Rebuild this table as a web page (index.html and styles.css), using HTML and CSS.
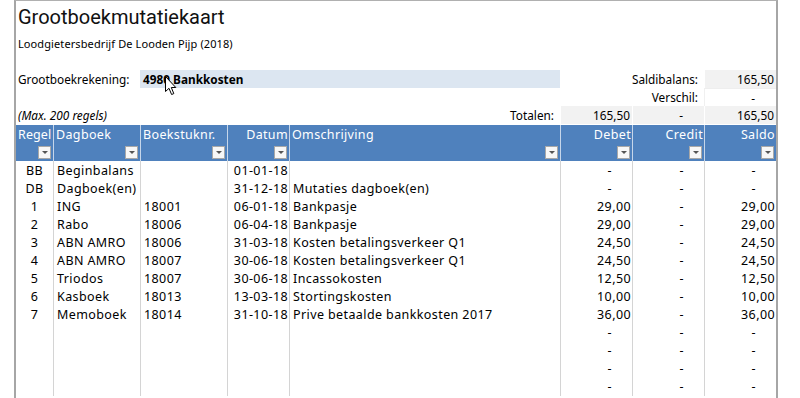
FILE: index.html
```html
<!DOCTYPE html>
<html>
<head>
<meta charset="utf-8">
<link rel="stylesheet" href="styles.css">
</head>
<body>
<div class="sheet">
  <div class="title">Grootboekmutatiekaart</div>
  <div class="subtitle">Loodgietersbedrijf De Looden Pijp (2018)</div>

  <div class="row top">
    <div class="c span2 lbl">Grootboekrekening:</div>
    <div class="c span3 input">4980 Bankkosten
      <svg class="cursor" width="13" height="20" viewBox="0 0 13 20"><path d="M0.5 0.5 L0.5 15.5 L4 12.3 L6.6 18.5 L8.8 17.6 L6.3 11.5 L10.8 11.5 Z" fill="#fff" stroke="#000" stroke-width="1" stroke-linejoin="miter"/></svg>
    </div>
    <div class="c span2 rlbl">Saldibalans:</div>
    <div class="c num gray">165,50</div>
  </div>
  <div class="row top">
    <div class="c span7 rlbl">Verschil:</div>
    <div class="c num boxed"><span class="dash">-</span></div>
  </div>
  <div class="row top">
    <div class="c span5 tot"><span class="max">(Max. 200 regels)</span><span>Totalen:</span></div>
    <div class="c num gray">165,50</div>
    <div class="c num gray"><span class="dash">-</span></div>
    <div class="c num gray">165,50</div>
  </div>

  <div class="row head">
    <div class="h"><span>Regel</span><i class="dd"></i></div>
    <div class="h"><span>Dagboek</span><i class="dd"></i></div>
    <div class="h"><span>Boekstuknr.</span><i class="dd"></i></div>
    <div class="h r"><span>Datum</span><i class="dd"></i></div>
    <div class="h"><span>Omschrijving</span><i class="dd"></i></div>
    <div class="h r"><span>Debet</span><i class="dd"></i></div>
    <div class="h r"><span>Credit</span><i class="dd"></i></div>
    <div class="h r"><span>Saldo</span><i class="dd"></i></div>
  </div>

  <div class="row data"><div class="d ctr">BB</div><div class="d">Beginbalans</div><div class="d"></div><div class="d rt">01-01-18</div><div class="d"></div><div class="d num"><span class="dash">-</span></div><div class="d num"><span class="dash">-</span></div><div class="d num"><span class="dash">-</span></div></div>
  <div class="row data"><div class="d ctr">DB</div><div class="d">Dagboek(en)</div><div class="d"></div><div class="d rt">31-12-18</div><div class="d">Mutaties dagboek(en)</div><div class="d num"><span class="dash">-</span></div><div class="d num"><span class="dash">-</span></div><div class="d num"><span class="dash">-</span></div></div>
  <div class="row data"><div class="d ctr">1</div><div class="d">ING</div><div class="d">18001</div><div class="d rt">06-01-18</div><div class="d">Bankpasje</div><div class="d num">29,00</div><div class="d num"><span class="dash">-</span></div><div class="d num">29,00</div></div>
  <div class="row data"><div class="d ctr">2</div><div class="d">Rabo</div><div class="d">18006</div><div class="d rt">06-04-18</div><div class="d">Bankpasje</div><div class="d num">29,00</div><div class="d num"><span class="dash">-</span></div><div class="d num">29,00</div></div>
  <div class="row data"><div class="d ctr">3</div><div class="d">ABN AMRO</div><div class="d">18006</div><div class="d rt">31-03-18</div><div class="d">Kosten betalingsverkeer Q1</div><div class="d num">24,50</div><div class="d num"><span class="dash">-</span></div><div class="d num">24,50</div></div>
  <div class="row data"><div class="d ctr">4</div><div class="d">ABN AMRO</div><div class="d">18007</div><div class="d rt">30-06-18</div><div class="d">Kosten betalingsverkeer Q1</div><div class="d num">24,50</div><div class="d num"><span class="dash">-</span></div><div class="d num">24,50</div></div>
  <div class="row data"><div class="d ctr">5</div><div class="d">Triodos</div><div class="d">18007</div><div class="d rt">30-06-18</div><div class="d">Incassokosten</div><div class="d num">12,50</div><div class="d num"><span class="dash">-</span></div><div class="d num">12,50</div></div>
  <div class="row data"><div class="d ctr">6</div><div class="d">Kasboek</div><div class="d">18013</div><div class="d rt">13-03-18</div><div class="d">Stortingskosten</div><div class="d num">10,00</div><div class="d num"><span class="dash">-</span></div><div class="d num">10,00</div></div>
  <div class="row data"><div class="d ctr">7</div><div class="d">Memoboek</div><div class="d">18014</div><div class="d rt">31-10-18</div><div class="d">Prive betaalde bankkosten 2017</div><div class="d num">36,00</div><div class="d num"><span class="dash">-</span></div><div class="d num">36,00</div></div>
  <div class="row data"><div class="d ctr"></div><div class="d"></div><div class="d"></div><div class="d rt"></div><div class="d"></div><div class="d num"><span class="dash">-</span></div><div class="d num"><span class="dash">-</span></div><div class="d num"><span class="dash">-</span></div></div>
  <div class="row data"><div class="d ctr"></div><div class="d"></div><div class="d"></div><div class="d rt"></div><div class="d"></div><div class="d num"><span class="dash">-</span></div><div class="d num"><span class="dash">-</span></div><div class="d num"><span class="dash">-</span></div></div>
  <div class="row data"><div class="d ctr"></div><div class="d"></div><div class="d"></div><div class="d rt"></div><div class="d"></div><div class="d num"><span class="dash">-</span></div><div class="d num"><span class="dash">-</span></div><div class="d num"><span class="dash">-</span></div></div>
  <div class="row data"><div class="d ctr"></div><div class="d"></div><div class="d"></div><div class="d rt"></div><div class="d"></div><div class="d num"><span class="dash">-</span></div><div class="d num"><span class="dash">-</span></div><div class="d num"><span class="dash">-</span></div></div>
</div>
</body>
</html>
```

FILE: styles.css
```css
* { box-sizing: border-box; }
html, body { margin: 0; padding: 0; background: #fff; }
body {
  font-family: "Noto Sans", "Open Sans", sans-serif;
  font-size: 11.5px;
  color: #000;
  width: 800px;
  height: 398px;
  overflow: hidden;
}
.sheet {
  margin-left: 14px;
  width: 764px;
  height: 398px;
  border-left: 2px solid #a6a6a6;
  border-right: 2px solid #a6a6a6;
  border-top: 1px solid #b0b0b0;
}
.title {
  height: 33px;
  padding-left: 2px;
  font-family: Roboto, "Noto Sans", sans-serif;
  font-weight: 400;
  font-size: 20px;
  line-height: 33px;
  color: #111;
}
.subtitle {
  height: 36px;
  padding-left: 2px;
  font-size: 11px;
  letter-spacing: 0.1px;
  line-height: 20px;
}
.row {
  display: grid;
  grid-template-columns: 37px 87px 87px 62px 271px 72px 72px 72px;
  height: 18px;
}
.top { font-size: 11.8px; }
.c { line-height: 18px; white-space: nowrap; }
.span2 { grid-column: span 2; }
.span3 { grid-column: span 3; }
.span5 { grid-column: span 5; }
.span7 { grid-column: span 7; }
.lbl { padding-left: 2px; }
.rlbl { text-align: right; padding-right: 6px; }
.input {
  position: relative;
  background: #dce6f1;
  font-weight: bold;
  padding-left: 3px;
}
.cursor { position: absolute; left: 25px; top: 6px; }
.num { text-align: right; padding-right: 2px; }
.gray { background: #f2f2f2; border-left: 1px solid #fff; }
.boxed { border-left: 1px solid #f0f0f0; border-top: 1px solid #eee; border-bottom: 1px solid #eee; }
.dash { padding-right: 19px; }
.tot {
  display: flex;
  justify-content: space-between;
  padding-left: 2px;
  padding-right: 6px;
}
.max { font-style: italic; }
.head {
  height: 36px;
  margin-top: 1px;
  background: #4f81bd;
  color: #fff;
  font-size: 12.5px;
  letter-spacing: 0.35px;
}
.h {
  position: relative;
  border-left: 1px solid #c6d6ea;
  padding: 0 2px;
  line-height: 18px;
  padding-top: 1px;
  white-space: nowrap;
}
.h:first-child { border-left: none; padding-left: 2px; letter-spacing: 0.1px; }
.h.r { text-align: right; padding-right: 1px; }
.dd {
  position: absolute;
  right: 2px;
  bottom: 2px;
  width: 13px;
  height: 13px;
  background: #f7f7f7;
  border: 1px solid #a8a8a8;
}
.dd::after {
  content: "";
  position: absolute;
  left: 3px;
  top: 4px;
  border-left: 3px solid transparent;
  border-right: 3px solid transparent;
  border-top: 3px solid #555;
}
.data { font-size: 12.5px; letter-spacing: 0.4px; }
.data .d {
  border-left: 1px solid #d4d4d4;
  line-height: 18px;
  padding: 1px 3px 0 3px;
  white-space: nowrap;
}
.data .d:first-child { border-left: none; }
.data .ctr { text-align: center; }
.data .rt { text-align: right; padding-right: 1px; }
.data .num { text-align: right; padding-right: 1px; }
```
